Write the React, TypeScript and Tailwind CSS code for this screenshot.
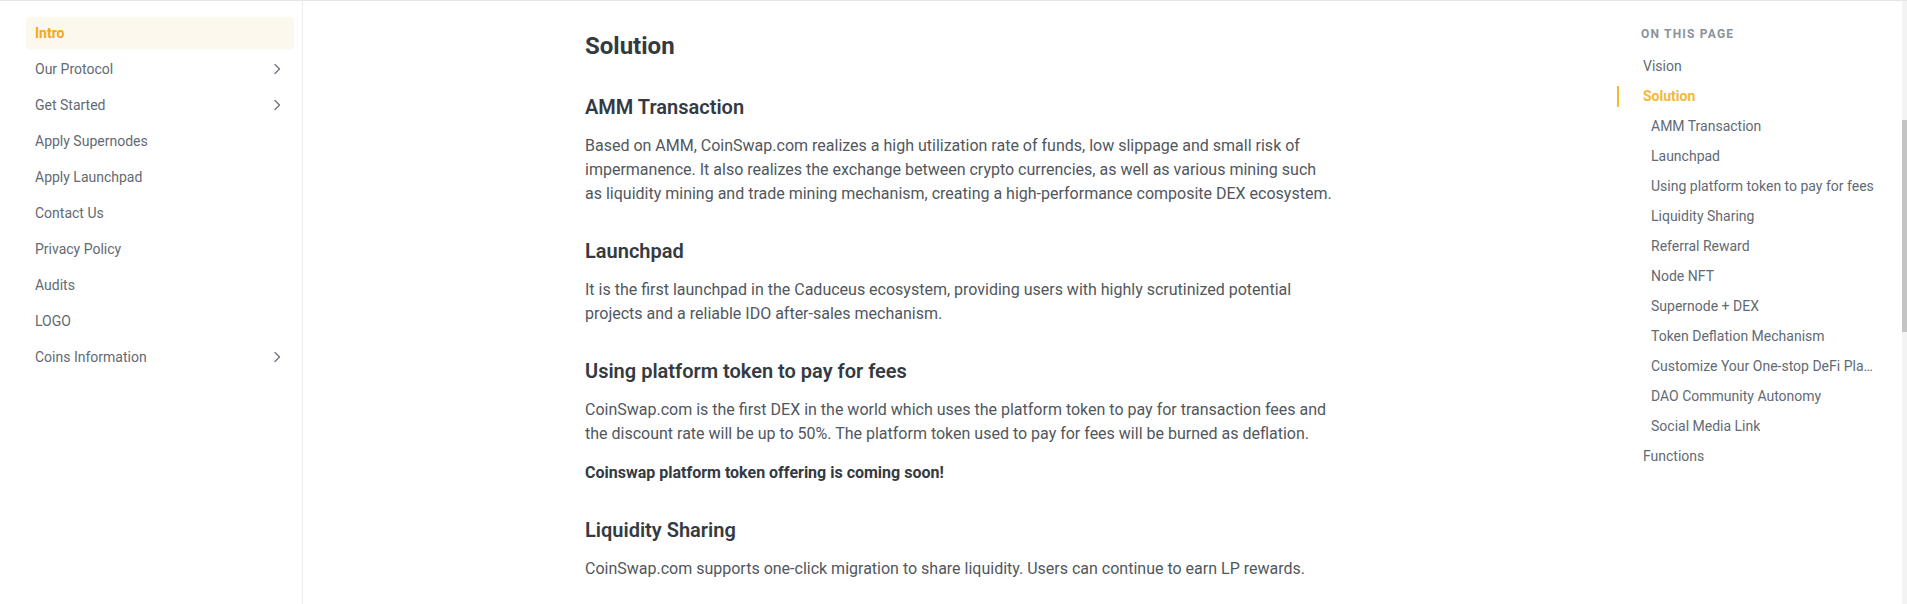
import React from "react";

const sideItems: { label: string; chevron?: boolean; active?: boolean }[] = [
  { label: "Intro", active: true },
  { label: "Our Protocol", chevron: true },
  { label: "Get Started", chevron: true },
  { label: "Apply Supernodes" },
  { label: "Apply Launchpad" },
  { label: "Contact Us" },
  { label: "Privacy Policy" },
  { label: "Audits" },
  { label: "LOGO" },
  { label: "Coins Information", chevron: true },
];

const toc: { label: string; sub?: boolean; active?: boolean }[] = [
  { label: "Vision" },
  { label: "Solution", active: true },
  { label: "AMM Transaction", sub: true },
  { label: "Launchpad", sub: true },
  { label: "Using platform token to pay for fees", sub: true },
  { label: "Liquidity Sharing", sub: true },
  { label: "Referral Reward", sub: true },
  { label: "Node NFT", sub: true },
  { label: "Supernode + DEX", sub: true },
  { label: "Token Deflation Mechanism", sub: true },
  { label: "Customize Your One-stop DeFi Platform", sub: true },
  { label: "DAO Community Autonomy", sub: true },
  { label: "Social Media Link", sub: true },
  { label: "Functions" },
];

function Chevron() {
  return (
    <svg width="16" height="16" viewBox="0 0 16 16" fill="none" stroke="#6b7280" strokeWidth="1.3" strokeLinecap="round" strokeLinejoin="round">
      <path d="M6 3.5 L10.5 8 L6 12.5" />
    </svg>
  );
}

export default function App() {
  return (
    <div className="flex h-[604px] w-full overflow-hidden border-t border-[#e6e6e6] bg-white font-['Roboto',sans-serif]">
      <aside className="w-[303px] shrink-0 border-r border-[#ececec] pt-[14px] pl-[26px] pr-[8px]">
        {sideItems.map((it) => (
          <div key={it.label} className="h-[36px] py-[2px]">
            <div
              className={
                it.active
                  ? "flex h-full items-center justify-between rounded-[4px] bg-[#fdf8ee] pl-[9px] pr-[9px] text-[14px] font-bold text-[#f5a623]"
                  : "flex h-full items-center justify-between rounded-[4px] pl-[9px] pr-[9px] text-[14px] text-[#626a73]"
              }
            >
              <span>{it.label}</span>
              {it.chevron ? <Chevron /> : null}
            </div>
          </div>
        ))}
      </aside>

      <main className="flex-1 pl-[282px] pt-[29px]">
        <div className="w-[750px]">
          <h1 className="mb-[30px] text-[24px] leading-[32px] font-bold text-[#343a42]">Solution</h1>

          <h2 className="mt-[31px] mb-[13px] text-[20px] leading-[28px] font-semibold text-[#343a42]">AMM Transaction</h2>
          <p className="mb-[15px] text-[16px] leading-[24px] text-[#51575e]">
            Based on AMM, CoinSwap.com realizes a high utilization rate of funds, low slippage and small risk of impermanence. It also realizes the exchange between crypto currencies, as well as various mining such as liquidity mining and trade mining mechanism, creating a high-performance composite DEX ecosystem.
          </p>

          <h2 className="mt-[31px] mb-[13px] text-[20px] leading-[28px] font-semibold text-[#343a42]">Launchpad</h2>
          <p className="mb-[15px] text-[16px] leading-[24px] text-[#51575e]">
            It is the first launchpad in the Caduceus ecosystem, providing users with highly scrutinized potential projects and a reliable IDO after-sales mechanism.
          </p>

          <h2 className="mt-[31px] mb-[13px] text-[20px] leading-[28px] font-semibold text-[#343a42]">Using platform token to pay for fees</h2>
          <p className="mb-[15px] text-[16px] leading-[24px] text-[#51575e]">
            CoinSwap.com is the first DEX in the world which uses the platform token to pay for transaction fees and the discount rate will be up to 50%. The platform token used to pay for fees will be burned as deflation.
          </p>
          <p className="mb-[15px] text-[16px] leading-[24px] font-bold text-[#343a42]">Coinswap platform token offering is coming soon!</p>

          <h2 className="mt-[31px] mb-[13px] text-[20px] leading-[28px] font-semibold text-[#343a42]">Liquidity Sharing</h2>
          <p className="mb-[15px] text-[16px] leading-[24px] text-[#51575e]">
            CoinSwap.com supports one-click migration to share liquidity. Users can continue to earn LP rewards.
          </p>
        </div>
      </main>

      <aside className="relative w-[290px] shrink-0 pt-[25px]">
        <div className="pl-[24px] text-[12px] leading-[16px] font-bold tracking-[0.1em] text-[#8a939c]">ON THIS PAGE</div>
        <div className="mt-[9px] pr-[32px]">
          {toc.map((t) => (
            <div key={t.label} className="flex h-[30px] items-center">
              <div className={t.active ? "h-[21px] w-[2px] shrink-0 bg-[#f5b833]" : "h-[21px] w-[2px] shrink-0"} />
              <span
                className={
                  (t.sub ? "ml-[32px] " : "ml-[24px] ") +
                  (t.active
                    ? "truncate text-[14px] font-bold text-[#f5b833]"
                    : "truncate text-[14px] text-[#626a73]")
                }
              >
                {t.label}
              </span>
            </div>
          ))}
        </div>
        <div className="absolute top-0 right-0 h-full w-[5px] bg-[#f3f3f3]">
          <div className="mt-[119px] h-[212px] w-full bg-[#c4c4c4]" />
        </div>
      </aside>
    </div>
  );
}
